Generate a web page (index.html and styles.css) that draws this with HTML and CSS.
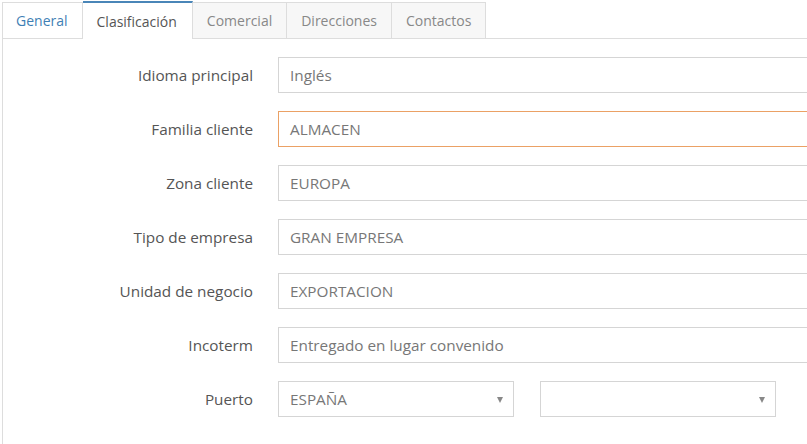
FILE: index.html
```
<!DOCTYPE html>
<html lang="es">

<head>
    <meta charset="UTF-8">
    <meta name="viewport" content="width=device-width, initial-scale=1.0">
    <title>Cliente</title>
    <link rel="stylesheet" href="styles.css">
</head>

<body>
    <div class="page">
        <div class="tabs">
            <a class="tab first">General</a>
            <a class="tab active">Clasificación</a>
            <a class="tab">Comercial</a>
            <a class="tab">Direcciones</a>
            <a class="tab">Contactos</a>
        </div>

        <div class="panel">
            <div class="row">
                <label>Idioma principal</label>
                <div class="field">Inglés</div>
            </div>
            <div class="row">
                <label>Familia cliente</label>
                <div class="field focus">ALMACEN</div>
            </div>
            <div class="row">
                <label>Zona cliente</label>
                <div class="field">EUROPA</div>
            </div>
            <div class="row">
                <label>Tipo de empresa</label>
                <div class="field">GRAN EMPRESA</div>
            </div>
            <div class="row">
                <label>Unidad de negocio</label>
                <div class="field">EXPORTACION</div>
            </div>
            <div class="row">
                <label>Incoterm</label>
                <div class="field">Entregado en lugar convenido</div>
            </div>
            <div class="row">
                <label>Puerto</label>
                <div class="selects">
                    <div class="field select">ESPAÑA<span class="arrow"></span></div>
                    <div class="field select"><span class="arrow"></span></div>
                </div>
            </div>
        </div>
    </div>
</body>

</html>
```
FILE: styles.css
```
body {
    font-family: "Open Sans", Arial, sans-serif;
    font-size: 14px;
    background-color: #fff;
    margin: 0;
}

.page {
    width: 100vw;
    height: 100vh;
    overflow: hidden;
    padding: 1px 0 0 2px;
    box-sizing: border-box;
}

.tabs {
    display: flex;
    height: 37px;
    width: 900px;
    border-bottom: 1px solid #ddd;
}

.tab {
    display: flex;
    align-items: center;
    padding: 0 14px;
    margin-top: 1px;
    background-color: #f7f7f7;
    border: 1px solid #ddd;
    border-left: none;
    border-bottom: none;
    color: #888;
}

.tab.first {
    padding: 0 14px 0 13px;
    border-left: 1px solid #ddd;
    background-color: #fff;
    color: #3f7fb5;
}

.tab.active {
    margin-top: 0;
    padding: 0 15px 0 14px;
    background-color: #fff;
    border-top: 2px solid #4a86b8;
    color: #555;
    height: 36px;
    margin-bottom: -1px;
}

.panel {
    border-left: 1px solid #ddd;
    padding-top: 18px;
    height: 420px;
    width: 900px;
}

.row {
    display: flex;
    align-items: center;
    margin-bottom: 18px;
    font-size: 15.3px;
}

.row label {
    width: 250px;
    text-align: right;
    margin-right: 25px;
    color: #555;
}

.field {
    height: 34px;
    width: 560px;
    border: 1px solid #d5d5d5;
    padding: 0 11px;
    display: flex;
    align-items: center;
    color: #777;
    position: relative;
}

.field.focus {
    border-color: #eba165;
}

.selects {
    display: flex;
    gap: 26px;
}

.field.select {
    width: 212px;
}

.arrow {
    position: absolute;
    right: 10px;
    top: 15px;
    width: 0;
    height: 0;
    border-left: 3px solid transparent;
    border-right: 3px solid transparent;
    border-top: 6px solid #888;
}
```
